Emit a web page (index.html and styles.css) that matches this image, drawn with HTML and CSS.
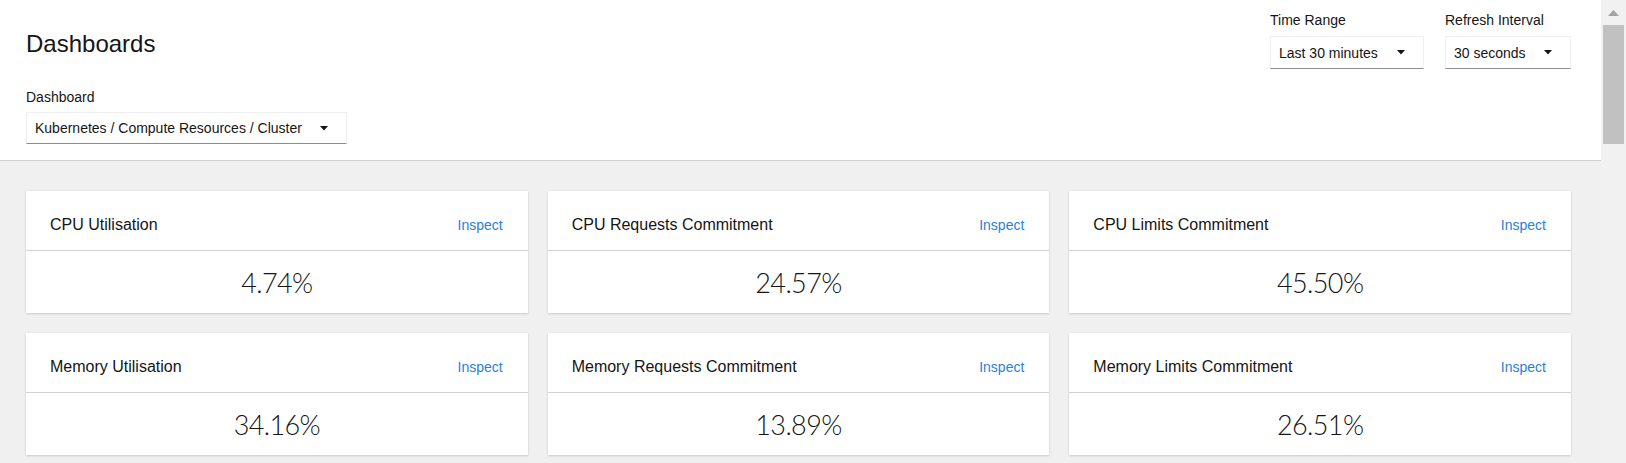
FILE: index.html
```html
<!DOCTYPE html>
<html lang="en">
<head>
<meta charset="utf-8">
<title>Dashboards</title>
<link rel="stylesheet" href="styles.css">
</head>
<body>
<div class="app">
  <div class="main">
    <header class="page-header">
      <div class="header-left">
        <h1 class="page-title">Dashboards</h1>
        <div class="field-label">Dashboard</div>
        <div class="dropdown dropdown--board">
          <span class="dropdown-text">Kubernetes / Compute Resources / Cluster</span>
          <svg class="caret" width="8" height="5" viewBox="0 0 8 5"><polygon points="0,0 8,0 4,4.5" fill="#151515"/></svg>
        </div>
      </div>
      <div class="header-right">
        <div class="filter">
          <div class="field-label">Time Range</div>
          <div class="dropdown dropdown--time">
            <span class="dropdown-text">Last 30 minutes</span>
            <svg class="caret" width="8" height="5" viewBox="0 0 8 5"><polygon points="0,0 8,0 4,4.5" fill="#151515"/></svg>
          </div>
        </div>
        <div class="filter">
          <div class="field-label">Refresh Interval</div>
          <div class="dropdown dropdown--refresh">
            <span class="dropdown-text">30 seconds</span>
            <svg class="caret" width="8" height="5" viewBox="0 0 8 5"><polygon points="0,0 8,0 4,4.5" fill="#151515"/></svg>
          </div>
        </div>
      </div>
    </header>

    <section class="cards">
      <div class="card">
        <div class="card-header"><span class="card-title">CPU Utilisation</span><a class="card-link">Inspect</a></div>
        <div class="card-body">4.74%</div>
      </div>
      <div class="card">
        <div class="card-header"><span class="card-title">CPU Requests Commitment</span><a class="card-link">Inspect</a></div>
        <div class="card-body">24.57%</div>
      </div>
      <div class="card">
        <div class="card-header"><span class="card-title">CPU Limits Commitment</span><a class="card-link">Inspect</a></div>
        <div class="card-body">45.50%</div>
      </div>
      <div class="card">
        <div class="card-header"><span class="card-title">Memory Utilisation</span><a class="card-link">Inspect</a></div>
        <div class="card-body">34.16%</div>
      </div>
      <div class="card">
        <div class="card-header"><span class="card-title">Memory Requests Commitment</span><a class="card-link">Inspect</a></div>
        <div class="card-body">13.89%</div>
      </div>
      <div class="card">
        <div class="card-header"><span class="card-title">Memory Limits Commitment</span><a class="card-link">Inspect</a></div>
        <div class="card-body">26.51%</div>
      </div>
    </section>
  </div>

  <div class="scrollbar">
    <div class="scroll-up">
      <svg width="11" height="6" viewBox="0 0 11 6"><polygon points="0,6 11,6 5.5,0" fill="#a3a3a3"/></svg>
    </div>
    <div class="scroll-thumb"></div>
  </div>
</div>
</body>
</html>
```

FILE: styles.css
```css
* {
  box-sizing: border-box;
}

html, body {
  margin: 0;
  padding: 0;
}

body {
  font-family: "Liberation Sans", Arial, sans-serif;
  color: #151515;
  background: #f0f0f0;
  overflow: hidden;
}

.app {
  display: flex;
  height: 463px;
  overflow: hidden;
}

.main {
  flex: 1;
  min-width: 0;
  background: #f0f0f0;
}

/* Header */
.page-header {
  display: flex;
  justify-content: space-between;
  align-items: flex-start;
  background: #ffffff;
  border-bottom: 1px solid #d2d2d2;
  padding: 0 30px 16px 26px;
}

.header-left {
  padding-top: 28px;
}

.page-title {
  margin: 0;
  font-size: 24px;
  line-height: 32px;
  font-weight: normal;
  color: #151515;
}

.header-left .field-label {
  margin-top: 27px;
  margin-bottom: 5px;
}

.field-label {
  font-size: 14px;
  line-height: 20px;
  color: #151515;
}

.header-right {
  display: flex;
  gap: 21px;
  padding-top: 10px;
}

.filter .field-label {
  margin-bottom: 6px;
}

.dropdown {
  display: flex;
  align-items: center;
  height: 32px;
  padding: 0 18px 0 8px;
  background: #ffffff;
  border: 1px solid #f0f0f0;
  border-bottom-color: #8a8d90;
  font-size: 14px;
  color: #151515;
}

.dropdown-text {
  flex: 1;
  white-space: nowrap;
}

.caret {
  flex: none;
  display: block;
}

.dropdown--board {
  width: 321px;
}

.dropdown--time {
  width: 154px;
  height: 33px;
}

.dropdown--refresh {
  width: 126px;
  height: 33px;
}

/* Cards */
.cards {
  display: grid;
  grid-template-columns: repeat(3, 1fr);
  gap: 20px;
  padding: 30px 30px 0 26px;
}

.card {
  background: #ffffff;
  box-shadow: 0 1px 2px 0 rgba(3, 3, 3, 0.14), 0 0 2px 0 rgba(3, 3, 3, 0.06);
}

.card-header {
  display: flex;
  justify-content: space-between;
  align-items: baseline;
  padding: 22px 25px 13px 24px;
  border-bottom: 1px solid #d2d2d2;
  line-height: 24px;
}

.card-title {
  font-size: 16px;
  color: #151515;
}

.card-link {
  font-size: 14px;
  color: #2a7fd8;
  text-decoration: none;
  cursor: pointer;
}

.card-body {
  text-align: center;
  padding: 16px 0 14px;
  font-family: Lato, "Liberation Sans", sans-serif;
  font-weight: 300;
  font-size: 27px;
  line-height: 32px;
  letter-spacing: -0.6px;
  color: #151515;
}

/* Scrollbar */
.scrollbar {
  flex: none;
  width: 25px;
  background: #f1f1f1;
  display: flex;
  flex-direction: column;
}

.scroll-up {
  height: 25px;
  display: flex;
  justify-content: center;
  padding-top: 10px;
}

.scroll-up svg {
  display: block;
}

.scroll-thumb {
  height: 119px;
  margin: 0 2px;
  background: #c1c1c1;
}
```
